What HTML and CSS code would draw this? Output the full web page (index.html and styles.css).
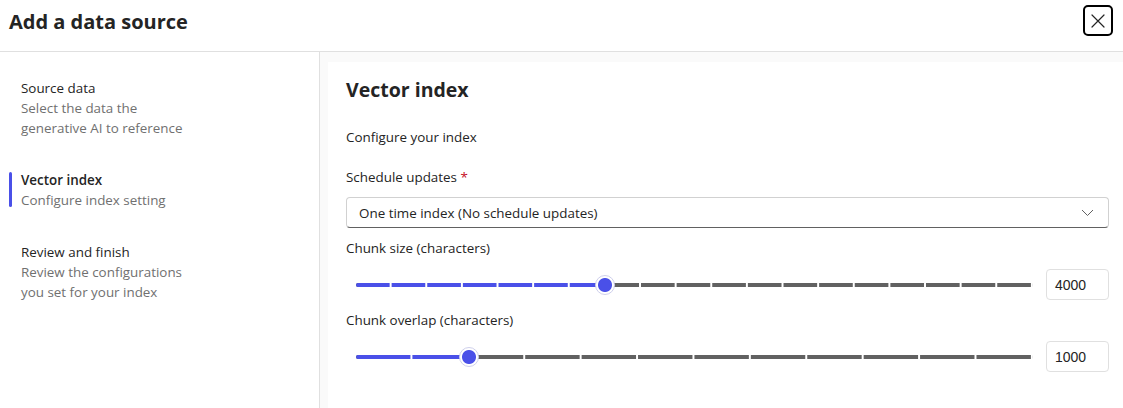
FILE: index.html
```html
<!DOCTYPE html>
<html lang="en">
<head>
<meta charset="utf-8">
<title>Add a data source</title>
<link rel="stylesheet" href="styles.css">
</head>
<body>
<div class="dialog">
  <header class="header">
    <h1 class="title">Add a data source</h1>
    <button class="close" aria-label="Close">
      <svg width="14" height="14" viewBox="0 0 14 14"><path d="M1 1L13 13M13 1L1 13" stroke="#242424" stroke-width="1.2" fill="none" stroke-linecap="round"/></svg>
    </button>
  </header>
  <div class="body">
    <nav class="steps">
      <div class="step">
        <div class="step-title">Source data</div>
        <div class="step-desc">Select the data the<br>generative AI to reference</div>
      </div>
      <div class="step active">
        <div class="step-title">Vector index</div>
        <div class="step-desc">Configure index setting</div>
      </div>
      <div class="step">
        <div class="step-title">Review and finish</div>
        <div class="step-desc">Review the configurations<br>you set for your index</div>
      </div>
    </nav>
    <main class="content">
      <section class="card">
        <h2 class="card-title">Vector index</h2>
        <p class="intro">Configure your index</p>
        <div class="field">
          <label class="label">Schedule updates <span class="req">*</span></label>
          <div class="dropdown">
            <span>One time index (No schedule updates)</span>
            <svg width="13" height="8" viewBox="0 0 13 8"><path d="M1 1L6.5 6.5L12 1" stroke="#616161" stroke-width="1" fill="none"/></svg>
          </div>
        </div>
        <div class="field tight">
          <label class="label">Chunk size (characters)</label>
          <div class="slider-row">
            <div class="slider">
              <div class="track" style="--steps:19; --pct:36.84%">
                <div class="fill"></div>
                <div class="ticks"></div>
                <div class="thumb"></div>
              </div>
            </div>
            <div class="num">4000</div>
          </div>
        </div>
        <div class="field tight">
          <label class="label">Chunk overlap (characters)</label>
          <div class="slider-row">
            <div class="slider">
              <div class="track" style="--steps:12; --pct:16.67%">
                <div class="fill"></div>
                <div class="ticks"></div>
                <div class="thumb"></div>
              </div>
            </div>
            <div class="num">1000</div>
          </div>
        </div>
      </section>
    </main>
  </div>
</div>
</body>
</html>
```

FILE: styles.css
```css
* { box-sizing: border-box; }
html, body { margin: 0; padding: 0; }
body {
  width: 1123px;
  height: 408px;
  overflow: hidden;
  background: #fff;
  font-family: "Open Sans", "Noto Sans", sans-serif;
  font-size: 13.4px;
  color: #242424;
}
.dialog { display: flex; flex-direction: column; height: 408px; }
.header {
  height: 52px;
  flex: none;
  display: flex;
  align-items: flex-start;
  justify-content: space-between;
  border-bottom: 1px solid #e0e0e0;
  padding: 0 9px 0 9px;
}
.title {
  margin: 0;
  font-size: 20px;
  font-weight: 700;
  line-height: 44px;
  color: #242424;
}
.close {
  margin-top: 5px;
  margin-right: 1px;
  width: 30px;
  height: 31px;
  border: 2px solid #000;
  border-radius: 5px;
  background: #fff;
  padding: 0;
  display: flex;
  align-items: center;
  justify-content: center;
}
.body { flex: 1; display: flex; min-height: 0; }
.steps {
  width: 320px;
  flex: none;
  border-right: 1px solid #e0e0e0;
  padding: 26px 0 0 9px;
  display: flex;
  flex-direction: column;
  gap: 32px;
}
.step { position: relative; padding-left: 12px; line-height: 20px; }
.step-title { color: #242424; }
.step-desc { color: #707070; }
.step.active .step-title { font-weight: 600; }
.step.active::before {
  content: "";
  position: absolute;
  left: 0;
  top: 2px;
  bottom: 3px;
  width: 3px;
  border-radius: 2px;
  background: #4a50e8;
}
.content {
  flex: 1;
  background: #fafafa;
  padding: 10px 0 0 8px;
  min-width: 0;
}
.card {
  background: #fff;
  height: 100%;
  padding: 14px 14px 0 18px;
}
.card-title {
  margin: 0;
  font-size: 19.5px;
  font-weight: 700;
  line-height: 28px;
}
.intro { margin: 23px 0 0 0; line-height: 20px; }
.field { margin-top: 20px; }
.field.tight { margin-top: 10px; }
.label { display: block; line-height: 20px; }
.req { color: #c50f1f; }
.dropdown {
  margin-top: 10px;
  height: 31px;
  border: 1px solid #d1d1d1;
  border-bottom-color: #616161;
  border-radius: 4px;
  display: flex;
  align-items: center;
  justify-content: space-between;
  padding: 0 14px 0 12px;
}
.slider-row {
  margin-top: 11px;
  display: flex;
  align-items: center;
  height: 31px;
}
.slider { flex: 1; padding: 0 8px 0 10px; }
.track {
  position: relative;
  height: 4px;
  border-radius: 2px;
  background: #616161;
}
.fill {
  position: absolute;
  left: 0; top: 0; bottom: 0;
  width: var(--pct);
  background: #4a50e8;
  border-radius: 2px;
}
.ticks {
  position: absolute;
  left: 0; top: 0; bottom: 0;
  width: calc(100% + 1px);
  background-image: linear-gradient(to right, transparent calc(100% - 2px), #fff calc(100% - 2px));
  background-size: calc((100% - 1px) / var(--steps)) 100%;
  background-repeat: repeat-x;
}
.thumb {
  position: absolute;
  top: 50%;
  left: var(--pct);
  width: 20px;
  height: 20px;
  transform: translate(-50%, -50%);
  border-radius: 50%;
  border: 1px solid #cfd0ec;
  background: radial-gradient(circle, #4a50e8 0 6.5px, #fff 7.5px);
}
.num {
  margin-left: 5px;
  width: 63px;
  height: 31px;
  border: 1px solid #e0e0e0;
  border-radius: 4px;
  display: flex;
  align-items: center;
  padding-left: 8px;
  font-family: "Liberation Sans", Arial, sans-serif;
  font-size: 14px;
  color: #242424;
}
```
